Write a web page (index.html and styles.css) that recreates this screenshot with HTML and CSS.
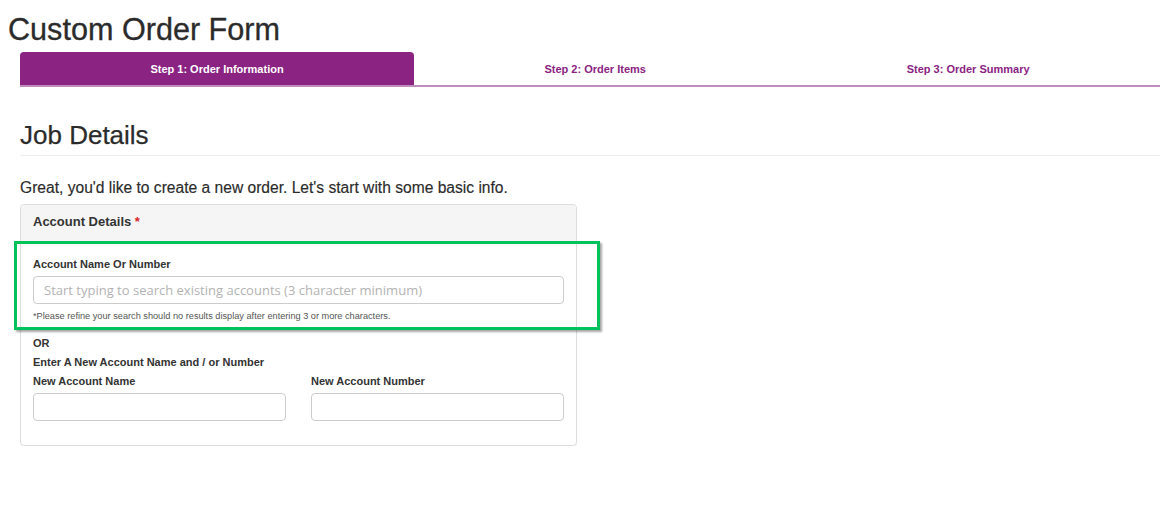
FILE: index.html
```html
<!DOCTYPE html>
<html lang="en">
  <head>
    <meta charset="UTF-8" />
    <meta name="viewport" content="width=device-width, initial-scale=1.0" />
    <title>Custom Order Form</title>
    <link rel="stylesheet" href="styles.css">
  </head>
  <body>
    <h1 class="title">Custom Order Form</h1>

    <ul class="steps">
      <li class="active">Step 1: Order Information</li>
      <li>Step 2: Order Items</li>
      <li>Step 3: Order Summary</li>
    </ul>

    <div class="page">
      <h2 class="section">Job Details</h2>

      <p class="intro">Great, you'd like to create a new order. Let's start with some basic info.</p>

      <div class="panel">
        <div class="panel-head">Account Details <span class="req">*</span></div>
        <div class="panel-body">
          <div class="search">
            <label>Account Name Or Number</label>
            <input type="text" placeholder="Start typing to search existing accounts (3 character minimum)" />
            <p class="help">*Please refine your search should no results display after entering 3 or more characters.</p>
            <div class="highlight"></div>
          </div>

          <div class="or">OR</div>
          <div class="sub">Enter A New Account Name and / or Number</div>

          <div class="cols">
            <div class="col">
              <label>New Account Name</label>
              <input type="text" />
            </div>
            <div class="col">
              <label>New Account Number</label>
              <input type="text" />
            </div>
          </div>
        </div>
      </div>
    </div>
  </body>
</html>
```

FILE: styles.css
```css
* {
  margin: 0;
  padding: 0;
  box-sizing: border-box;
}

body {
  font-family: "Liberation Sans", Arial, sans-serif;
  color: #333;
  background: #fff;
}

ul,
li {
  list-style: none;
}

.title {
  padding: 12px 0 0 8px;
  height: 52px;
  font-size: 30.6px;
  font-weight: normal;
  line-height: 34px;
  color: #2b2b2b;
  -webkit-text-stroke: 0.3px #2b2b2b;
}

.steps {
  display: flex;
  margin: 0 14px 0 20px;
  border-bottom: 2px solid #c08cbd;
}

.steps li {
  flex: 1 1 auto;
  height: 33px;
  line-height: 34px;
  text-align: center;
  font-size: 11px;
  font-weight: bold;
  color: #8b2383;
}

.steps .active {
  background-color: #8b2383;
  color: #fff;
  border-radius: 4px 4px 0 0;
}

.page {
  margin: 0 14px 0 20px;
}

.section {
  padding-top: 33px;
  height: 69px;
  font-size: 26px;
  font-weight: normal;
  line-height: 30px;
  color: #2b2b2b;
  -webkit-text-stroke: 0.25px #2b2b2b;
  border-bottom: 1px solid #eee;
}

.intro {
  padding-top: 22px;
  height: 48px;
  font-size: 15.6px;
  line-height: 20px;
  color: #2b2b2b;
  -webkit-text-stroke: 0.15px #2b2b2b;
}

.panel {
  width: 557px;
  border: 1px solid #ddd;
  border-radius: 4px;
  box-shadow: 0 1px 1px rgba(0, 0, 0, 0.05);
}

.panel-head {
  height: 36px;
  padding: 0 12px;
  line-height: 34px;
  font-size: 13px;
  font-weight: bold;
  background-color: #f5f5f5;
  border-radius: 4px 4px 0 0;
}

.req {
  color: #d9262c;
}

.panel-body {
  padding: 16px 12px 24px;
}

.search {
  position: relative;
}

label {
  display: block;
  font-size: 11px;
  font-weight: bold;
  line-height: 14px;
  margin-bottom: 5px;
}

input {
  display: block;
  width: 100%;
  height: 28px;
  padding: 0 10px;
  border: 1px solid #ccc;
  border-radius: 4px;
  font-family: "Open Sans", "Liberation Sans", sans-serif;
  font-size: 13px;
}

input::placeholder {
  color: #b3b3b3;
}

.help {
  margin-top: 6px;
  font-size: 9.2px;
  line-height: 12px;
  color: #555;
}

.highlight {
  position: absolute;
  left: -19px;
  top: -16px;
  width: 586px;
  height: 89px;
  border: 3px solid #00c25a;
  box-shadow: 2px 2px 2px rgba(0, 0, 0, 0.35);
}

.or {
  margin-top: 14px;
  font-size: 11px;
  font-weight: bold;
  line-height: 14px;
}

.sub {
  margin-top: 5px;
  font-size: 11px;
  font-weight: bold;
  line-height: 14px;
}

.cols {
  display: flex;
  gap: 25px;
  margin-top: 5px;
}

.col {
  flex: 1;
}
```
